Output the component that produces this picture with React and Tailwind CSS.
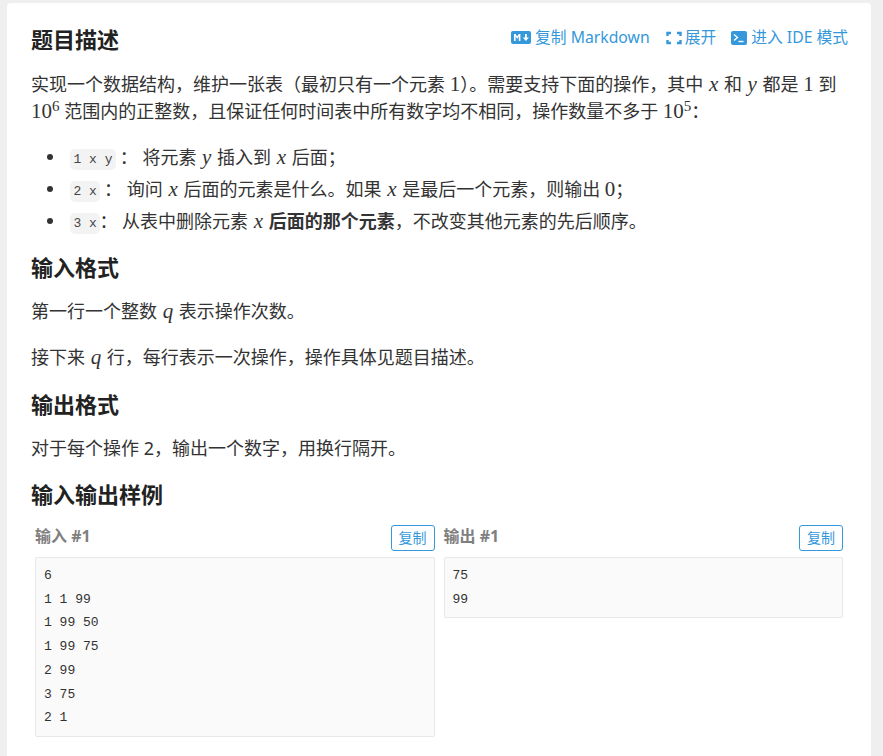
const sans = "font-['Noto_Sans','Noto_Sans_CJK_SC',sans-serif]";

function V({ children }) {
  return <i className="font-['Liberation_Serif',serif] text-[21px] leading-none mx-[1px]">{children}</i>;
}

function N({ children }) {
  return <span className="font-['Liberation_Serif',serif] text-[21px] leading-none">{children}</span>;
}

function Code({ children }) {
  return (
    <code className="font-['Liberation_Mono',monospace] text-[13px] leading-none align-[1px] bg-[#f3f3f3] rounded-[5px] px-[3.5px] py-[3px] -mr-[1px] text-[#444]">
      {children}
    </code>
  );
}

function Heading({ children, className = '' }) {
  return <h2 className={`text-[22px] leading-[30px] font-bold text-[#222] ${className}`}>{children}</h2>;
}

function Item({ children }) {
  return (
    <li className="flex items-center">
      <span className="w-[6px] h-[6px] rounded-full bg-[#333] mr-[17px] shrink-0" />
      <span>{children}</span>
    </li>
  );
}

function Sample({ label, lines, className = '' }) {
  return (
    <div className={`flex-1 min-w-0 pl-[4px] pr-[4px] ${className}`}>
      <div className="flex justify-between items-start h-[32px]">
        <span className="text-[16px] leading-[22px] font-bold text-[#7f7f7f]">{label}</span>
        <button className="w-[44px] h-[26px] border border-[#3498db] rounded-[3px] text-[14px] leading-none text-[#3498db] bg-white">复制</button>
      </div>
      <pre className="border border-[#e8e8e8] rounded-[2px] bg-[#fafafa] px-[8px] py-[6px] font-['Liberation_Mono',monospace] text-[13px] leading-[23.7px] text-[#333]">
        {lines.join('\n')}
      </pre>
    </div>
  );
}

export default function App() {
  return (
    <div className={`h-[756px] overflow-hidden bg-[#efefef] pt-[3px] pl-[7px] pr-[12px] ${sans}`}>
      <div className="bg-white rounded-[4px] h-[800px] px-[24px] pt-[20px] text-[18px] text-[#333]">
        <div className="flex justify-between items-center h-[32px]">
          <h2 className="text-[22px] leading-[32px] font-bold text-[#222]">题目描述</h2>
          <div className="flex items-center gap-[15px] text-[15.75px] text-[#3498db] -mt-[3px] -mr-[1px]">
            <span className="flex items-center gap-[4px]">
              <svg width="20" height="13" viewBox="0 0 20 13">
                <rect width="20" height="13" rx="2" fill="#3498db" />
                <path d="M3 10V3h1.6l1.6 2.4L7.8 3h1.6v7H7.8V5.6L6.2 8 4.6 5.6V10zM14 3h1.8v3.5H18L14.9 10 11.8 6.5H14z" fill="#fff" />
              </svg>
              复制 Markdown
            </span>
            <span className="flex items-center gap-[2px]">
              <svg width="18" height="14" viewBox="0 0 18 14" fill="none" stroke="#3498db" strokeWidth="2.4">
                <path d="M6 2H2.5v3M2.5 9v3H6M12 2h3.5v3M15.5 9v3H12" />
              </svg>
              展开
            </span>
            <span className="flex items-center gap-[4px]">
              <svg width="16" height="14" viewBox="0 0 16 14">
                <rect width="16" height="14" rx="2" fill="#3498db" />
                <path d="M3 3.5 6.5 6.5 3 9.5" fill="none" stroke="#fff" strokeWidth="1.4" />
                <path d="M7.5 10.5h5" stroke="#fff" strokeWidth="1.4" />
              </svg>
              进入 IDE 模式
            </span>
          </div>
        </div>

        <p className="mt-[16px] leading-[27px]">
          实现一个数据结构，维护一张表（最初只有一个元素 <N>1</N>）。需要支持下面的操作，其中 <V>x</V> 和 <V>y</V> 都是 <N>1</N> 到 <N>10<sup className="text-[15px]">6</sup></N> 范围内的正整数，且保证任何时间表中所有数字均不相同，操作数量不多于 <N>10<sup className="text-[15px]">5</sup></N>：
        </p>

        <ul className="mt-[16px] pl-[16px] leading-[32px]">
          <Item><Code>1 x y</Code> ： 将元素 <V>y</V> 插入到 <V>x</V> 后面；</Item>
          <Item><Code>2 x</Code> ： 询问 <V>x</V> 后面的元素是什么。如果 <V>x</V> 是最后一个元素，则输出 <N>0</N>；</Item>
          <Item><Code>3 x</Code>： 从表中删除元素 <V>x</V> <b>后面的那个元素</b>，不改变其他元素的先后顺序。</Item>
        </ul>

        <Heading className="mt-[15px]">输入格式</Heading>
        <p className="mt-[16px] leading-[27px]">第一行一个整数 <V>q</V> 表示操作次数。</p>
        <p className="mt-[19px] leading-[27px]">接下来 <V>q</V> 行，每行表示一次操作，操作具体见题目描述。</p>

        <Heading className="mt-[18px]">输出格式</Heading>
        <p className="mt-[16px] leading-[27px]">对于每个操作 2，输出一个数字，用换行隔开。</p>

        <Heading className="mt-[17px]">输入输出样例</Heading>
        <div className="mt-[16px] flex">
          <Sample label="输入 #1" lines={['6', '1 1 99', '1 99 50', '1 99 75', '2 99', '3 75', '2 1']} />
          <Sample label="输出 #1" lines={['75', '99']} className="pl-[5px]" />
        </div>
      </div>
    </div>
  );
}
